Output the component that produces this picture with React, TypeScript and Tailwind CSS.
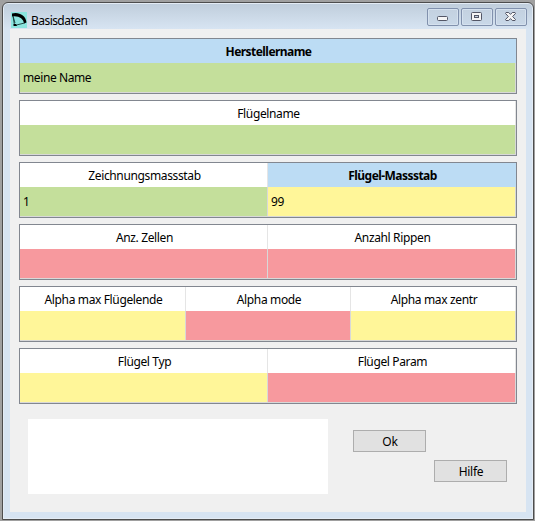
import React from "react";

type Tone = "green" | "yellow" | "red";
type Column = { label: string; value?: string; tone: Tone; active?: boolean };

const tones: Record<Tone, string> = {
  green: "bg-[#c4df9b]",
  yellow: "bg-[#fff699]",
  red: "bg-[#f7999e]",
};

const tables: { grid: string; columns: Column[] }[] = [
  { grid: "grid-cols-[496px]", columns: [{ label: "Herstellername", value: "meine Name", tone: "green", active: true }] },
  { grid: "grid-cols-[496px]", columns: [{ label: "Flügelname", tone: "green" }] },
  {
    grid: "grid-cols-[248px_248px]",
    columns: [
      { label: "Zeichnungsmassstab", value: "1", tone: "green" },
      { label: "Flügel-Massstab", value: "99", tone: "yellow", active: true },
    ],
  },
  {
    grid: "grid-cols-[248px_248px]",
    columns: [
      { label: "Anz. Zellen", tone: "red" },
      { label: "Anzahl Rippen", tone: "red" },
    ],
  },
  {
    grid: "grid-cols-[166px_165px_165px]",
    columns: [
      { label: "Alpha max Flügelende", tone: "yellow" },
      { label: "Alpha mode", tone: "red" },
      { label: "Alpha max zentr", tone: "yellow" },
    ],
  },
  {
    grid: "grid-cols-[248px_248px]",
    columns: [
      { label: "Flügel Typ", tone: "yellow" },
      { label: "Flügel Param", tone: "red" },
    ],
  },
];

function DataTable({ grid, columns }: { grid: string; columns: Column[] }) {
  return (
    <div className={`grid h-14 w-[498px] grid-rows-[24px_30px] border border-[#828790] bg-white ${grid}`}>
      {columns.map((c) => (
        <div
          key={c.label}
          className={`flex items-center justify-center border-r pt-[2px] pl-[2px] ${
            c.active ? "border-[#bcdcf4] bg-[#bcdcf4] font-bold tracking-[-0.55px]" : "border-[#e5e5e5] bg-white tracking-[-0.36px]"
          }`}
        >
          {c.label}
        </div>
      ))}
      {columns.map((c) => (
        <div
          key={c.label + "-value"}
          className={`flex items-center border-r border-b border-[#d8d8d8] pt-px pl-[3px] tracking-[-0.4px] ${tones[c.tone]}`}
        >
          {c.value}
        </div>
      ))}
    </div>
  );
}

function CaptionButton({ label, children }: { label: string; children: React.ReactNode }) {
  return (
    <button
      aria-label={label}
      className="flex h-[18px] w-8 items-start rounded-[2px] border border-[#8191ad] bg-linear-to-b from-[#c3d1e0] to-[#c9d8e8] pt-[3px] pl-[9px] shadow-[inset_0_0_0_1px_#d5e1ee]"
    >
      {children}
    </button>
  );
}

export default function App() {
  return (
    <div className="h-[521px] w-[535px] bg-[#a0a0a0] pt-[2px] pl-[2px] font-['Noto_Sans','Open_Sans',sans-serif] text-[12px] leading-4 text-black">
      <div className="h-[518px] w-[532px] rounded-t-[6px] border border-[#4d4d4d] bg-[linear-gradient(#bfcddb,#d7e4f2_26px)] px-[7px] shadow-[inset_0_0_0_1px_#e4ecf5]">
        <header className="-mr-px flex h-[26px] items-start">
          <svg className="mt-[9px] ml-px h-4 w-4" viewBox="0 0 16 16">
            <rect width="16" height="16" fill="#8be4de" />
            <path d="M1 1.5C7-.5 15 3 15.5 10.5L13 11.5C12.5 7 8 3.5 1 4.5Z" />
            <path d="M2 4L3.5 13.5L13.5 11M2 4L4 11" fill="none" stroke="#173c3a" strokeWidth=".9" />
            <path d="M2.5 12H5L6 14H2.5Z" />
          </svg>
          <h1 className="mt-[10px] ml-1 tracking-[-0.55px]">Basisdaten</h1>
          <div className="mt-[5px] ml-auto flex gap-[2px]">
            <CaptionButton label="Minimieren">
              <svg width="11" height="9" viewBox="0 0 11 9">
                <rect x=".5" y="4.5" width="10" height="4" rx="1" fill="#f5f5f5" stroke="#535666" />
              </svg>
            </CaptionButton>
            <CaptionButton label="Maximieren">
              <svg width="11" height="9" viewBox="0 0 11 9">
                <rect x=".5" y=".5" width="10" height="8" rx="1" fill="#f5f5f5" stroke="#535666" />
                <rect x="3.5" y="3.5" width="4" height="2" fill="#c3d1e0" stroke="#535666" />
              </svg>
            </CaptionButton>
            <CaptionButton label="Schließen">
              <svg width="11" height="9" viewBox="0 0 11 9">
                <path
                  d="M1 .5H3.7L5.5 2.4L7.3 .5H10L10.5 1.5L7.6 4.5L10.5 7.5L10 8.5H7.3L5.5 6.6L3.7 8.5H1L.5 7.5L3.4 4.5L.5 1.5Z"
                  fill="#f5f5f5"
                  stroke="#535666"
                />
              </svg>
            </CaptionButton>
          </div>
        </header>
        <main className="h-[483px] w-[516px] bg-[#f0f0f0] pt-[9px] pl-[9px]">
          <div className="flex flex-col gap-[6px]">
            {tables.map((t) => (
              <DataTable key={t.columns[0].label} {...t} />
            ))}
          </div>
          <div className="mt-[15px] ml-[9px] flex tracking-[-0.25px]">
            <textarea className="h-[75px] w-[300px] resize-none bg-white" />
            <button className="mt-[11px] ml-[25px] h-[22px] w-[73px] border border-[#adadad] bg-[#e1e1e1] pt-px pl-px">Ok</button>
            <button className="mt-[41px] ml-2 h-[22px] w-[73px] border border-[#adadad] bg-[#e1e1e1] pt-px pl-px">Hilfe</button>
          </div>
        </main>
      </div>
    </div>
  );
}
